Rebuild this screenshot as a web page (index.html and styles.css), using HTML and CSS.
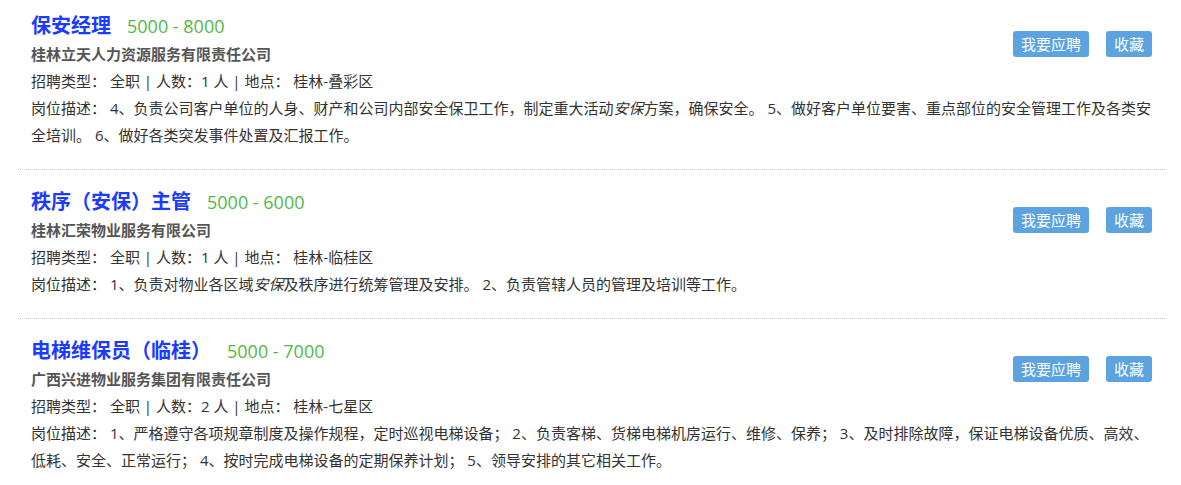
FILE: index.html
```html
<!DOCTYPE html>
<html>
    <head>
        <title>招聘信息</title>
        <meta charset="utf-8">
        <link rel="stylesheet" href="styles.css">
    </head>
    <body>
        <div class="job-list">
            <div class="job">
                <div class="job-top">
                    <div class="job-info">
                        <h2 class="job-title">保安经理<span class="salary">5000 - 8000</span></h2>
                        <div class="company">桂林立天人力资源服务有限责任公司</div>
                        <div class="meta">招聘类型： 全职 | 人数：1 人 | 地点： 桂林-叠彩区</div>
                    </div>
                    <div class="actions">
                        <a class="btn" href="#">我要应聘</a>
                        <a class="btn" href="#">收藏</a>
                    </div>
                </div>
                <div class="desc">岗位描述： 4、负责公司客户单位的人身、财产和公司内部安全保卫工作，制定重大活动<em>安保</em>方案，确保安全。 5、做好客户单位要害、重点部位的安全管理工作及各类安全培训。 6、做好各类突发事件处置及汇报工作。</div>
            </div>
            <div class="job">
                <div class="job-top">
                    <div class="job-info">
                        <h2 class="job-title">秩序（安保）主管<span class="salary">5000 - 6000</span></h2>
                        <div class="company">桂林汇荣物业服务有限公司</div>
                        <div class="meta">招聘类型： 全职 | 人数：1 人 | 地点： 桂林-临桂区</div>
                    </div>
                    <div class="actions">
                        <a class="btn" href="#">我要应聘</a>
                        <a class="btn" href="#">收藏</a>
                    </div>
                </div>
                <div class="desc">岗位描述： 1、负责对物业各区域<em>安保</em>及秩序进行统筹管理及安排。 2、负责管辖人员的管理及培训等工作。</div>
            </div>
            <div class="job">
                <div class="job-top">
                    <div class="job-info">
                        <h2 class="job-title">电梯维保员（临桂）<span class="salary">5000 - 7000</span></h2>
                        <div class="company">广西兴进物业服务集团有限责任公司</div>
                        <div class="meta">招聘类型： 全职 | 人数：2 人 | 地点： 桂林-七星区</div>
                    </div>
                    <div class="actions">
                        <a class="btn" href="#">我要应聘</a>
                        <a class="btn" href="#">收藏</a>
                    </div>
                </div>
                <div class="desc">岗位描述： 1、严格遵守各项规章制度及操作规程，定时巡视电梯设备； 2、负责客梯、货梯电梯机房运行、维修、保养； 3、及时排除故障，保证电梯设备优质、高效、低耗、安全、正常运行； 4、按时完成电梯设备的定期保养计划； 5、领导安排的其它相关工作。</div>
            </div>
        </div>
    </body>
</html>
```

FILE: styles.css
```css
body
{
    margin: 0;
    background-color: #fff;
    color: #333;
    font-family: "Open Sans", "Noto Sans CJK SC", sans-serif;
    font-size: 15px;
    line-height: 27px;
}

.job-list
{
    padding: 0 16px 0 18px;
}

.job
{
    padding: 17px 13px 20px 13px;
    border-bottom: 1px dotted #c8c8c8;
}

.job:first-child
{
    padding-top: 11px;
}

.job:last-child
{
    border-bottom: none;
}

.job-top
{
    display: flex;
    justify-content: space-between;
    align-items: flex-start;
}

.job-title
{
    margin: 0;
    font-size: 20px;
    line-height: 30px;
    font-weight: bold;
    color: #1b3bff;
}

.salary
{
    margin-left: 16px;
    font-size: 18px;
    font-weight: normal;
    color: #52b846;
}

.company
{
    font-weight: bold;
    color: #555;
}

.actions
{
    display: flex;
    gap: 17px;
    margin-top: 20px;
}

.btn
{
    display: block;
    padding: 0 8px;
    height: 26px;
    line-height: 26px;
    font-size: 15px;
    color: #fff;
    text-decoration: none;
    background-color: #5ca3e0;
    border-radius: 3px;
}

.desc em
{
    font-style: italic;
}
```
